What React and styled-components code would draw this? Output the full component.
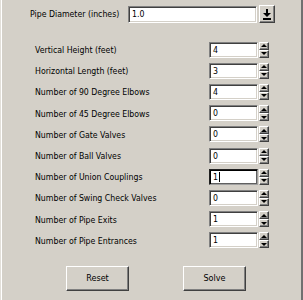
import React from 'react';
import styled, { createGlobalStyle } from 'styled-components';

const GlobalStyle = createGlobalStyle`
  html, body {
    margin: 0;
    padding: 0;
    background: #d4d0c8;
  }
  * { box-sizing: border-box; }
`;

const Window = styled.div`
  width: 303px;
  height: 300px;
  background: #d4d0c8;
  border-left: 1px solid #e2dfd9;
  box-shadow: inset 1px 0 #ffffff;
  border-right: 2px solid #707070;
  display: flex;
  flex-direction: column;
  font-family: "DejaVu Sans Condensed", "Liberation Sans", sans-serif;
  font-size: 8.7px;
  color: #000;
`;

const TopRow = styled.div`
  display: flex;
  align-items: center;
  height: 18px;
  margin-top: 5px;
  padding-left: 29px;
`;

const TopLabel = styled.span`
  width: 98px;
`;

const sunken = `
  background: #fff;
  border: 1px solid;
  border-color: #808080 #ffffff #ffffff #808080;
  box-shadow: inset 1px 1px #404040, inset -1px -1px #d4d0c8;
`;

const raised = `
  background: #d4d0c8;
  border: 1px solid;
  border-color: #ffffff #404040 #404040 #ffffff;
  box-shadow: inset -1px -1px #808080;
`;

const ComboField = styled.div`
  ${sunken}
  width: 129px;
  height: 17px;
  display: flex;
  align-items: center;
  padding-left: 3px;
`;

const ComboButton = styled.div`
  ${raised}
  width: 16px;
  height: 18px;
  margin-left: 2px;
  display: flex;
  align-items: center;
  justify-content: center;
`;

const Form = styled.div`
  display: flex;
  flex-direction: column;
  margin-top: 16px;
`;

const Row = styled.div`
  display: flex;
  align-items: center;
  height: 21.2px;
  padding-left: 34px;
`;

const RowLabel = styled.span`
  width: 174px;
  padding-top: 1px;
`;

const Field = styled.div`
  ${sunken}
  width: 49px;
  height: 16px;
  display: flex;
  align-items: center;
  padding-left: 3px;
  ${p => p.$focused && `
    border-color: #202020 #a0a0a0 #a0a0a0 #202020;
    box-shadow: inset 1px 1px #000, inset -1px -1px #606060;
  `}
`;

const Caret = styled.span`
  display: inline-block;
  width: 1px;
  height: 10px;
  background: #000;
  margin-left: 1px;
`;

const Spinner = styled.div`
  display: flex;
  flex-direction: column;
  margin-left: 1px;
`;

const SpinButton = styled.div`
  ${raised}
  width: 10px;
  height: 8px;
  display: flex;
  align-items: center;
  justify-content: center;
`;

const ButtonRow = styled.div`
  display: flex;
  margin-top: 15px;
  padding-left: 65px;
  gap: 54px;
`;

const Button = styled.div`
  ${raised}
  width: 63px;
  height: 25px;
  display: flex;
  align-items: center;
  justify-content: center;
  font-size: 9px;
`;

const DropArrow = () => (
  <svg width="8" height="11" viewBox="0 0 8 11">
    <rect x="3" y="0" width="2" height="4" fill="#000" />
    <polygon points="0,4 8,4 4,8" fill="#000" />
    <rect x="0" y="9" width="8" height="2" fill="#000" />
  </svg>
);

const Tri = ({ up }) => (
  <svg width="6" height="3" viewBox="0 0 6 3">
    <polygon points={up ? '0,3 6,3 3,0' : '0,0 6,0 3,3'} fill="#000" />
  </svg>
);

const rows = [
  ['Vertical Height (feet)', '4'],
  ['Horizontal Length (feet)', '3'],
  ['Number of 90 Degree Elbows', '4'],
  ['Number of 45 Degree Elbows', '0'],
  ['Number of Gate Valves', '0'],
  ['Number of Ball Valves', '0'],
  ['Number of Union Couplings', '1', true],
  ['Number of Swing Check Valves', '0'],
  ['Number of Pipe Exits', '1'],
  ['Number of Pipe Entrances', '1'],
];

export default function App() {
  return (
    <>
      <GlobalStyle />
      <Window>
        <TopRow>
          <TopLabel>Pipe Diameter (inches)</TopLabel>
          <ComboField>1.0</ComboField>
          <ComboButton><DropArrow /></ComboButton>
        </TopRow>
        <Form>
          {rows.map(([label, value, focused]) => (
            <Row key={label}>
              <RowLabel>{label}</RowLabel>
              <Field $focused={focused}>
                {value}
                {focused && <Caret />}
              </Field>
              <Spinner>
                <SpinButton><Tri up /></SpinButton>
                <SpinButton><Tri /></SpinButton>
              </Spinner>
            </Row>
          ))}
        </Form>
        <ButtonRow>
          <Button>Reset</Button>
          <Button>Solve</Button>
        </ButtonRow>
      </Window>
    </>
  );
}
